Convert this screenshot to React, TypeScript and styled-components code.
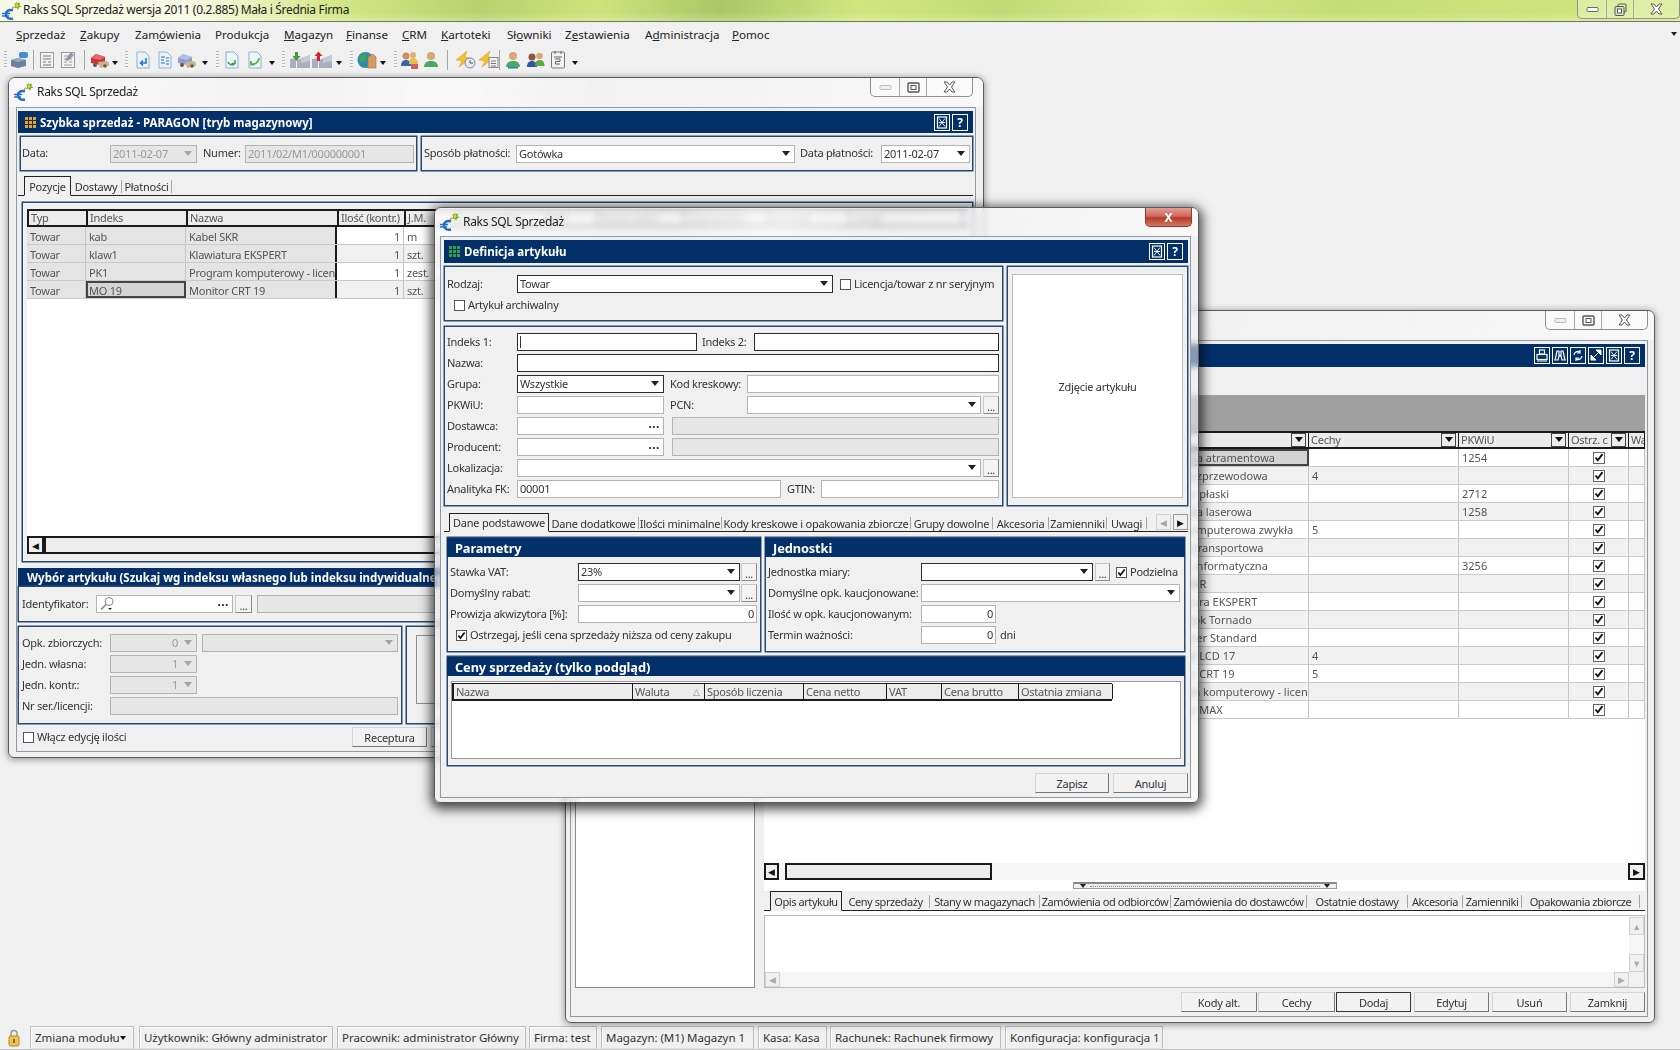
import React from 'react';
import styled, { createGlobalStyle } from 'styled-components';

const NAVY = '#04306a';
const LINE = '#27496f';

const GlobalStyle = createGlobalStyle`
  html, body { margin: 0; padding: 0; background: #f0f0f0; }
  * { box-sizing: border-box; }
  body { font-family: "Noto Sans", "Liberation Sans", sans-serif; font-size: 11px; letter-spacing: -0.25px; color: #333; }
`;

const Desktop = styled.div`
  position: relative;
  width: 1680px;
  height: 1050px;
  overflow: hidden;
  background: #f0f0f0;
  display: flex;
  flex-direction: column;
`;

const AppTitle = styled.div`
  height: 22px;
  flex: none;
  display: flex;
  align-items: flex-start;
  padding-left: 2px;
  border-bottom: 1px solid #6c7a58;
  background:
    linear-gradient(180deg, rgba(255,255,255,0) 60%, rgba(255,255,255,.25) 100%),
    linear-gradient(90deg, #f6f8e6 0, #f7f9e4 190px, #e4efb0 270px, #d3e685 340px, #b9d26c 480px, #cfe27c 600px, #aac765 720px, #d2e680 860px, #c3da74 1000px, #d6e986 1160px, #c6dc76 1340px, #d3e77f 1680px);
`;

const AppName = styled.span`
  font-size: 12px;
  letter-spacing: -0.32px;
  line-height: 20px;
  margin-left: 1px;
  color: #222;
`;

const MenuBar = styled.nav`
  height: 23px;
  flex: none;
  display: flex;
  align-items: center;
  padding: 1px 0 0 16px;
  background: #f0f0f0;
`;

const MenuItem = styled.span<{ $w: number }>`
  flex: none;
  width: ${(p) => p.$w}px;
  font-size: 11.6px;
  letter-spacing: 0;
  color: #222;
`;

const MenuEnd = styled.span`
  margin-left: auto;
  margin-right: 3px;
  width: 0;
  height: 0;
  border: 3px solid transparent;
  border-top: 4px solid #222;
  border-bottom: 0;
`;

const ToolBar = styled.div`
  height: 27px;
  flex: none;
  display: flex;
  align-items: center;
  padding-top: 2px;
  background: #f0f0f0;
`;

const ToolSlot = styled.span<{ $w: number }>`
  flex: none;
  width: ${(p) => p.$w}px;
  display: flex;
  justify-content: center;
  align-items: center;
  svg { flex: none; }
`;

const Grip = styled.i`
  width: 3px;
  height: 17px;
  background: repeating-linear-gradient(180deg, #b5b5b5 0 1px, #f5f5f5 1px 3px);
`;

const ToolSep = styled.i`
  width: 1px;
  height: 20px;
  background: #a5a5a5;
`;

const ToolCaret = styled.i`
  width: 0;
  height: 0;
  margin-top: 7px;
  border: 3px solid transparent;
  border-top: 4px solid #111;
  border-bottom: 0;
`;

const StatusCaret = styled(ToolCaret)`
  margin-top: 0;
  margin-right: 3px;
`;

const Spacer = styled.div`
  flex: 1;
`;

const StatusBar = styled.footer`
  height: 24px;
  flex: none;
  display: flex;
  align-items: stretch;
  padding-left: 8px;
  border-bottom: 1px solid #c4c4c4;
  background: #f0f0f0;
`;

const StatusLock = styled.span`
  width: 22px;
  flex: none;
  display: flex;
  align-items: center;
`;

const StatusCell = styled.span<{ $w: number; $gap?: number }>`
  flex: none;
  width: ${(p) => p.$w}px;
  margin-right: ${(p) => p.$gap ?? 4}px;
  display: flex;
  align-items: center;
  justify-content: space-between;
  padding: 0 4px;
  white-space: nowrap;
  border: 1px solid #bdbdbd;
  border-bottom-color: #e4e4e4;
  box-shadow: inset 1px 1px 0 #fff;
  font-size: 11.5px;
  letter-spacing: -0.05px;
`;

const Win = styled.section<{ $x: number; $y: number; $w: number; $h: number; $z: number; $deep?: boolean }>`
  position: absolute;
  left: ${(p) => p.$x}px;
  top: ${(p) => p.$y}px;
  width: ${(p) => p.$w}px;
  height: ${(p) => p.$h}px;
  z-index: ${(p) => p.$z};
  display: flex;
  flex-direction: column;
  border: 1px solid #5c5c5c;
  border-radius: 7px 7px 6px 6px;
  overflow: hidden;
  background: rgba(240, 240, 240, 0.55);
  backdrop-filter: blur(3px);
  box-shadow: ${(p) => (p.$deep ? '0 3px 12px 3px rgba(0,0,0,.72)' : '0 1px 6px 1px rgba(0,0,0,.35)')};
`;

const WinCaption = styled.header<{ $h: number; $pad: number }>`
  height: ${(p) => p.$h}px;
  flex: none;
  display: flex;
  align-items: flex-start;
  padding: 0 ${(p) => p.$pad}px 0 5px;
  background: linear-gradient(100deg, rgba(255,255,255,.55) 0, rgba(255,255,255,.2) 30%, rgba(255,255,255,.55) 45%, rgba(255,255,255,.15) 60%, rgba(255,255,255,.5) 100%);
`;

const WinName = styled.span`
  font-size: 12px;
  letter-spacing: -0.3px;
  line-height: 28px;
  margin-left: 3px;
  color: #222;
`;

const WinLogo = styled.span`
  margin-top: 4px;
  display: flex;
`;

const AppLogo = styled.span`
  margin-top: 1px;
  display: flex;
`;

const CaptionGroup = styled.div`
  margin-left: auto;
  height: 19px;
  display: flex;
  border: 1px solid #8f8f8f;
  border-top: 0;
  border-radius: 0 0 5px 5px;
  background: rgba(255, 255, 255, 0.3);
`;

const CaptionBtn = styled.span<{ $w: number }>`
  width: ${(p) => p.$w}px;
  display: flex;
  align-items: center;
  justify-content: center;
  & + & { border-left: 1px solid #a8a8a8; }
`;

const CloseRed = styled.span`
  margin-left: auto;
  width: 47px;
  height: 19px;
  display: flex;
  align-items: center;
  justify-content: center;
  border: 1px solid #8c3a32;
  border-top: 0;
  border-radius: 0 0 5px 5px;
  background: linear-gradient(180deg, #e2a096 0, #d2675a 45%, #b8392c 55%, #cf7a66 100%);
  color: #fff;
  font-weight: 700;
  font-size: 12px;
`;

const WinBody = styled.div<{ $m: string; $p: string }>`
  flex: 1;
  min-height: 0;
  margin: ${(p) => p.$m};
  padding: ${(p) => p.$p};
  display: flex;
  flex-direction: column;
  background: #f0f0f0;
  border: 1px solid #8d9aa6;
`;

const NavyBar = styled.div<{ $h?: number; $pl?: number }>`
  height: ${(p) => p.$h ?? 23}px;
  flex: none;
  display: flex;
  align-items: center;
  gap: 4px;
  padding: 0 5px 0 ${(p) => p.$pl ?? 5}px;
  background: ${NAVY};
  color: #fff;
  font-weight: 700;
  font-size: 11.5px;
  letter-spacing: 0;
  white-space: nowrap;
  overflow: hidden;
`;

const NavyTools = styled.div`
  margin-left: auto;
  display: flex;
  gap: 2px;
`;

const NavyBtn = styled.span`
  width: 16px;
  height: 17px;
  display: flex;
  align-items: center;
  justify-content: center;
  border: 1px solid #fff;
  color: #fff;
  font-size: 12px;
  font-weight: 700;
`;

const SectionHead = styled(NavyBar)<{ $big?: boolean; $fill?: boolean }>`
  height: ${(p) => (p.$big ? 19 : 18)}px;
  margin: ${(p) => (p.$fill ? '0' : '0 -1px')};
  ${(p) => (p.$fill ? 'flex: 1;' : '')}
  ${(p) => (p.$big ? 'font-size: 12.8px; letter-spacing: -0.1px;' : '')}
`;

const Panel = styled.div<{ $w?: number; $h?: number; $grow?: boolean; $p?: string }>`
  ${(p) => (p.$w ? `width: ${p.$w}px; flex: none;` : '')}
  ${(p) => (p.$h ? `height: ${p.$h}px;` : '')}
  ${(p) => (p.$grow ? 'flex: 1; min-width: 0;' : '')}
  padding: ${(p) => p.$p ?? '0'};
  border: 1px solid ${LINE};
  box-shadow: 0 0 0 .5px ${LINE};
  background: #f0f0f0;
  display: flex;
  flex-direction: column;
`;

const PlainStack = styled.div<{ $w?: number; $p?: string }>`
  ${(p) => (p.$w ? `width: ${p.$w}px; flex: none;` : '')}
  padding: ${(p) => p.$p ?? '0'};
  display: flex;
  flex-direction: column;
`;

const Row = styled.div<{ $mt?: number; $ml?: number; $h?: number; $end?: boolean; $stretch?: boolean; $grow?: boolean }>`
  display: flex;
  align-items: ${(p) => (p.$stretch ? 'stretch' : 'center')};
  justify-content: ${(p) => (p.$end ? 'flex-end' : 'flex-start')};
  flex: ${(p) => (p.$grow ? '1' : 'none')};
  white-space: nowrap;
  ${(p) => (p.$h ? `height: ${p.$h}px;` : '')}
  margin-top: ${(p) => p.$mt ?? 0}px;
  margin-left: ${(p) => p.$ml ?? 0}px;
`;

const FormRow = styled.div<{ $ml?: number }>`
  height: 18px;
  flex: none;
  display: flex;
  align-items: center;
  white-space: nowrap;
  margin-left: ${(p) => p.$ml ?? 0}px;
  & + & { margin-top: 3px; }
`;

const Label = styled.label<{ $w?: number; $ml?: number }>`
  flex: none;
  ${(p) => (p.$w ? `width: ${p.$w}px;` : '')}
  margin-left: ${(p) => p.$ml ?? 0}px;
  padding-bottom: 2px;
  white-space: nowrap;
  color: #333;
`;

const Field = styled.div<{ $w?: number; $ml?: number; $strong?: boolean; $off?: boolean; $right?: boolean; $grow?: boolean }>`
  ${(p) => (p.$w ? `width: ${p.$w}px; flex: none;` : '')}
  ${(p) => (p.$grow ? 'flex: 1; min-width: 0;' : '')}
  height: 18px;
  margin-left: ${(p) => p.$ml ?? 0}px;
  display: flex;
  align-items: center;
  justify-content: ${(p) => (p.$right ? 'flex-end' : 'space-between')};
  padding: 0 2px 1px;
  white-space: nowrap;
  overflow: hidden;
  border: 1px solid ${(p) => (p.$strong ? '#2b2b2b' : '#b4b4b4')};
  background: ${(p) => (p.$off ? '#e6e6e6' : '#fff')};
  color: ${(p) => (p.$off ? '#9a9a9a' : '#333')};
`;

const Caret = styled.i<{ $off?: boolean; $tight?: boolean }>`
  flex: none;
  width: 0;
  height: 0;
  margin: ${(p) => (p.$tight ? '0 2px 0 6px' : '0 2px 0 auto')};
  border: 4px solid transparent;
  border-top: 5px solid ${(p) => (p.$off ? '#a5a5a5' : '#222')};
  border-bottom: 0;
`;

const Dots = styled.b`
  margin-left: auto;
  margin-right: 1px;
  line-height: 10px;
  letter-spacing: 0.5px;
  font-size: 12px;
  transform: translateY(-2px);
  color: #222;
`;

const MiniBtn = styled.span<{ $w?: number; $ml?: number }>`
  flex: none;
  width: ${(p) => p.$w ?? 16}px;
  height: 18px;
  margin-left: ${(p) => p.$ml ?? 2}px;
  display: flex;
  align-items: center;
  justify-content: center;
  border: 1px solid #c8c8c8;
  border-right-color: #8a8a8a;
  border-bottom-color: #8a8a8a;
  background: #f3f3f3;
  font-size: 11px;
  line-height: 12px;
  padding-top: 3px;
`;

const Check = styled.span<{ $ml?: number }>`
  flex: none;
  width: 11px;
  height: 11px;
  margin-left: ${(p) => p.$ml ?? 0}px;
  margin-right: 3px;
  display: inline-flex;
  align-items: center;
  justify-content: center;
  border: 1px solid #555;
  background: #fff;
`;

const TabBar = styled.div<{ $pl: number; $h: number; $mt: number; $fill?: boolean }>`
  height: ${(p) => p.$h}px;
  flex: none;
  margin-top: ${(p) => p.$mt}px;
  display: flex;
  align-items: stretch;
  padding-left: ${(p) => p.$pl}px;
  border-bottom: 1px solid #222;
  ${(p) => (p.$fill ? 'background: #f0f0f0; letter-spacing: -0.42px;' : '')}
`;

const Tab = styled.span<{ $w: number; $active?: boolean }>`
  flex: none;
  width: ${(p) => p.$w}px;
  display: flex;
  align-items: center;
  justify-content: center;
  white-space: nowrap;
  margin-top: 4px;
  margin-bottom: 2px;
  border-right: 1px solid #a5a5a5;
  ${(p) =>
    p.$active
      ? `margin: 0 0 -1px; border: 1px solid #222; border-bottom: 1px solid #f0f0f0; background: #f0f0f0;`
      : ''}
`;

const TabArrow = styled.span<{ $ml: number; $dim?: boolean }>`
  width: 15px;
  height: 16px;
  margin: 1px 0 0 ${(p) => p.$ml}px;
  display: flex;
  align-items: center;
  justify-content: center;
  border: 1px solid ${(p) => (p.$dim ? '#cfcfcf' : '#9a9a9a')};
  color: ${(p) => (p.$dim ? '#a8a8a8' : '#111')};
  font-size: 9px;
`;

const Btn = styled.button<{ $w: number; $ml?: number; $default?: boolean }>`
  flex: none;
  width: ${(p) => p.$w}px;
  height: 20px;
  margin-left: ${(p) => p.$ml ?? 0}px;
  padding: 0;
  font: inherit;
  letter-spacing: inherit;
  color: #333;
  background: #f2f2f2;
  border: 1px solid ${(p) => (p.$default ? '#333' : '#d5d5d5')};
  border-right-color: ${(p) => (p.$default ? '#333' : '#777')};
  border-bottom-color: ${(p) => (p.$default ? '#333' : '#777')};
`;

/* siatki */
const GridHead = styled.div<{ $w?: number; $inset?: boolean; $open?: boolean }>`
  height: 18px;
  flex: none;
  display: flex;
  ${(p) => (p.$w ? `width: ${p.$w}px;` : '')}
  ${(p) => (p.$inset ? 'margin: 1px 0 0 0;' : '')}
  border-top: ${(p) => (p.$inset ? '1px' : '2px')} solid #1a1a1a;
  border-bottom: 2px solid #1a1a1a;
  border-left: ${(p) => (p.$open ? '0' : '2px solid #1a1a1a')};
  background: #ececec;
`;

const HeadCell = styled.div<{ $w: number; $thin?: boolean }>`
  flex: none;
  width: ${(p) => p.$w}px;
  display: flex;
  align-items: center;
  padding: 0 2px 1px;
  overflow: hidden;
  white-space: nowrap;
  color: #555;
  border-right: ${(p) => (p.$thin ? '1px' : '2px')} solid #1a1a1a;
`;

const GridRow = styled.div`
  height: 18px;
  flex: none;
  display: flex;
  border-bottom: 1px solid #c9c9c9;
`;

const ListRow = styled(GridRow)`
  font-size: 11px;
  letter-spacing: 0;
`;

const GridCell = styled.div<{ $w: number; $bg?: string; $right?: boolean; $focus?: boolean; $center?: boolean; $edge?: boolean; $low?: boolean }>`
  flex: none;
  width: ${(p) => p.$w}px;
  display: flex;
  align-items: center;
  justify-content: ${(p) => (p.$center ? 'center' : p.$right ? 'flex-end' : 'flex-start')};
  padding: ${(p) => (p.$low ? '2px 3px 0' : '0 3px')};
  overflow: hidden;
  white-space: nowrap;
  color: #555;
  background: ${(p) => p.$bg ?? 'transparent'};
  border-right: 1px solid #c4c4c4;
  ${(p) => (p.$edge ? 'border-right: 2px solid #1a1a1a;' : '')}
  ${(p) => (p.$focus ? 'outline: 2px solid #444; outline-offset: -2px; background: #d4d4d4;' : '')}
`;

const CheckCell = styled(Check)`
  margin: 0;
  width: 12px;
  height: 12px;
  border-color: #666;
`;

const HScroll = styled.div<{ $h: number }>`
  height: ${(p) => p.$h}px;
  flex: none;
  display: flex;
  align-items: stretch;
  background: #f6f6f6;
`;

const ScrollArrow = styled.span<{ $w: number; $dim?: boolean; $ml?: number }>`
  flex: none;
  width: ${(p) => p.$w}px;
  margin-left: ${(p) => p.$ml ?? 0}px;
  display: flex;
  align-items: center;
  justify-content: center;
  font-size: 9px;
  color: ${(p) => (p.$dim ? '#aaa' : '#111')};
  border: ${(p) => (p.$dim ? '1px solid #d2d2d2' : '2px solid #1a1a1a')};
  background: #f0f0f0;
`;

const ScrollCorner = styled.span`
  width: 15px;
  flex: none;
  background: #f0f0f0;
`;

const ScrollThumb = styled.span<{ $w: number; $ml: number }>`
  flex: none;
  width: ${(p) => p.$w}px;
  margin-left: ${(p) => p.$ml}px;
  border: 2px solid #1a1a1a;
  background: #ededed;
`;

const Fill = styled.div<{ $white?: boolean }>`
  flex: 1;
  min-height: 0;
  ${(p) => (p.$white ? 'background: #fff;' : '')}
`;

const ListBox = styled.div`
  flex: 1;
  margin: 5px 3px 6px;
  display: flex;
  flex-direction: column;
  border: 1px solid #9a9a9a;
  background: #fff;
  min-height: 0;
`;

const GrayBand = styled.div`
  height: 36px;
  flex: none;
  background: #a0a0a0;
`;

const ColumnSide = styled.div`
  width: 180px;
  flex: none;
  background: #fff;
  border: 1px solid #8c8c8c;
`;

const ColumnMain = styled.div`
  flex: 1;
  min-width: 0;
  display: flex;
  flex-direction: column;
  background: #fff;
`;

const Columns = styled.div`
  flex: 1;
  min-height: 0;
  margin-top: 28px;
  display: flex;
  gap: 9px;
`;

const HeadDrop = styled.span`
  margin-left: auto;
  width: 15px;
  height: 14px;
  flex: none;
  display: flex;
  align-items: center;
  justify-content: center;
  border: 1px solid #444;
  i {
    width: 0;
    height: 0;
    border: 4px solid transparent;
    border-top: 5px solid #111;
    border-bottom: 0;
  }
`;

const Splitter = styled.div`
  width: 264px;
  height: 7px;
  flex: none;
  margin: 2px 0 0 309px;
  display: flex;
  align-items: center;
  gap: 4px;
  padding: 0 6px;
  border: 1px solid #999;
  border-top: 2px solid #888;
  background: #f0f0f0;
  i {
    width: 0;
    height: 0;
    border: 3px solid transparent;
    border-top: 4px solid #222;
    border-bottom: 0;
  }
  span {
    flex: 1;
    border-top: 1px dotted #888;
  }
`;

const MemoBox = styled.div`
  height: 73px;
  flex: none;
  margin-top: 4px;
  display: flex;
  flex-direction: column;
  border: 1px solid #bdbdbd;
  background: #fff;
`;

const MemoMain = styled.div`
  flex: 1;
  min-height: 0;
  display: flex;
`;

const VScroll = styled.div`
  width: 15px;
  flex: none;
  margin-left: auto;
  display: flex;
  flex-direction: column;
  justify-content: space-between;
  background: #f6f6f6;
  padding: 1px 0 0;
`;

const VArrow = styled(ScrollArrow)`
  height: 18px;
  width: 15px;
`;

const PhotoBox = styled.div`
  flex: 1;
  margin: 7px 4px;
  display: flex;
  align-items: center;
  justify-content: center;
  background: #fff;
  border: 1px solid #bcbcbc;
`;

const InnerBox = styled.div`
  flex: 1;
  margin: 8px 4px 19px 9px;
  border: 1px solid #8e8e8e;
  border-right: 0;
`;

const CaretUp = styled.span`
  margin-left: auto;
  margin-right: 2px;
  font-size: 9px;
  color: #888;
`;

const TextCaret = styled.i`
  height: 12px;
  border-left: 1px solid #333;
`;

/* ikony */
const EuroLogo = () => (
  <svg width="20" height="20" viewBox="0 0 20 20">
    <path d="M11 9.5C7 8 4 10 4 13.500s3.500 5 7 4" fill="none" stroke="#1f6fc4" strokeWidth="2.4" />
    <path d="M0 12.500h8M0 15h7" stroke="#1f6fc4" strokeWidth="1.5" />
    <path d="M14 0l1.400 2.200 2.600-.6-.6 2.600 2.200 1.600-2.700.5-.7 2.700-1.500-2.300-2.700.3 1.300-2.400-1.300-2.400 2.500.6z" fill="#6fae28" />
    <circle cx="15" cy="4.500" r="1.400" fill="#f0cc30" />
    <path d="M10 8l1.500-2.500" stroke="#e07a2c" strokeWidth="1.300" />
  </svg>
);

const Cells = ({ color }: { color: string }) => (
  <svg width="11" height="11" viewBox="0 0 11 11">
    {[0, 4, 8].flatMap((x) => [0, 4, 8].map((y) => <rect key={`${x}-${y}`} x={x} y={y} width="3" height="3" fill={color} />))}
  </svg>
);

const CapMin = () => <svg width="13" height="7" viewBox="0 0 13 7"><rect x="1" y="1.500" width="11" height="4" rx="1" fill="#fff" stroke="#666" /></svg>;
const CapMinDim = () => <svg width="13" height="7" viewBox="0 0 13 7"><rect x="1" y="1.500" width="11" height="4" rx="1" fill="#eee" stroke="#bbb" /></svg>;
const CapMax = () => <svg width="13" height="11" viewBox="0 0 13 11"><rect x="1" y="1" width="11" height="9" rx="1" fill="none" stroke="#555" strokeWidth="1.400" /><rect x="4" y="3.500" width="5" height="4" fill="#fff" stroke="#555" /></svg>;
const CapRestore = () => <svg width="13" height="13" viewBox="0 0 13 13"><rect x="4" y="1" width="8" height="8" rx="1" fill="none" stroke="#555" /><rect x="1" y="3.500" width="9" height="9" rx="1" fill="#dfe8b8" stroke="#555" /><rect x="3.500" y="6" width="4" height="4" fill="#fff" stroke="#555" /></svg>;
const CapClose = () => <svg width="13" height="12" viewBox="0 0 13 12"><path d="M1 1h3l2.500 3L9 1h3L8.500 6 12 11H9L6.500 8 4 11H1l3.500-5z" fill="#fff" stroke="#555" /></svg>;

const TickMark = () => <svg width="10" height="9" viewBox="0 0 10 9"><path d="M1.500 4.500l2.300 2.800L8.500 1.200" fill="none" stroke="#111" strokeWidth="1.900" /></svg>;

const NavIcon = ({ kind }: { kind: string }) => {
  const white = { fill: 'none', stroke: '#fff', strokeWidth: 1.2 };
  return (
    <svg width="12" height="13" viewBox="0 0 12 13">
      {kind === 'box' && <><rect x="1.500" y="1" width="9" height="11" {...white} /><path d="M3 2.500l6 8M9 2.500l-6 8M3 6.500h6" {...white} strokeWidth={0.9} /></>}
      {kind === 'print' && <><rect x="3.500" y="1" width="5" height="4" {...white} /><rect x="1" y="5.500" width="10" height="5" {...white} /><path d="M1 12h10" {...white} /></>}
      {kind === 'find' && <path d="M3 2h2v4l1 1 1-1V2h2l2 9H8L7 7H5L4 11H1z" {...white} />}
      {kind === 'sync' && <path d="M2 6a4 4 0 0 1 6-3M10 7a4 4 0 0 1-6 3M8 1v3h-3M4 12V9h3" {...white} />}
      {kind === 'expand' && <path d="M1 11L11 1M11 1H6l5 5zM1 11h5L1 6z" fill="#fff" stroke="#fff" />}
    </svg>
  );
};

const docBase = (stroke: string, fill = '#f6f9fc') => (
  <path d="M3 1h8l4 4v12H3z" fill={fill} stroke={stroke} strokeWidth="1" />
);

const ToolIcon = ({ kind }: { kind: string }) => {
  switch (kind) {
    case 'db':
      return (
        <svg width="20" height="18" viewBox="0 0 20 18">
          <path d="M1 9l7-2 8 2v6l-8 2-7-2z" fill="#6f7fa0" />
          <path d="M1 9l7 2 8-2-8-2z" fill="#98a6c0" />
          <rect x="9" y="1" width="9" height="6" rx="2" fill="#3f8fd0" />
        </svg>
      );
    case 'sheet':
    case 'sheetGear':
      return (
        <svg width="18" height="18" viewBox="0 0 18 18">
          <rect x="2.500" y="1.500" width="13" height="15" fill="#f2f2f2" stroke="#9a9a9a" />
          <path d="M5 5h8M5 8h8M5 11h3M10 11h3M5 14h8" stroke={kind === 'sheet' ? '#777' : '#999'} />
          {kind === 'sheetGear' && <path d="M12 1l3 3-6 6-3-1z" fill="#8d99a8" />}
        </svg>
      );
    case 'truckRed':
    case 'truckBlue': {
      const c = kind === 'truckRed' ? '#c9353a' : '#8e9ed0';
      return (
        <svg width="22" height="18" viewBox="0 0 22 18">
          <path d="M2 7l5-4 9 3v5l-5 3-9-2z" fill={c} />
          <path d="M2 7l9 2 5-3-9-3z" fill={kind === 'truckRed' ? '#e2666a' : '#b5c0e4'} />
          <path d="M9 11l9-1 2 2v3l-9 2z" fill="#c9b590" />
          <circle cx="6" cy="14" r="2" fill="#6a5a44" />
          <circle cx="16" cy="15" r="1.800" fill="#6a5a44" />
        </svg>
      );
    }
    case 'docBlue':
      return <svg width="18" height="18" viewBox="0 0 18 18">{docBase('#8fb0d4', '#eaf3fb')}<path d="M12 7v5H7M9 9.500L6.500 12 9 14.500" fill="none" stroke="#2878c8" strokeWidth="1.600" /></svg>;
    case 'docList':
      return <svg width="18" height="18" viewBox="0 0 18 18">{docBase('#8fb0d4', '#eaf3fb')}<path d="M5 6h4M5 9h3M5 12h4M10 7h3M10 10h3M10 13h3" stroke="#2c6fb0" /></svg>;
    case 'docGreen':
      return <svg width="18" height="18" viewBox="0 0 18 18">{docBase('#8fb0d4', '#eef5fb')}<path d="M5 11c1 3 5 4 7 1M12 9v3.500H8.500" fill="none" stroke="#3fa04a" strokeWidth="1.600" /></svg>;
    case 'docLime':
      return <svg width="18" height="18" viewBox="0 0 18 18">{docBase('#8fb0d4', '#eef5fb')}<path d="M13 7c0 4-4 7-8 6M5 10v3.500h3.500" fill="none" stroke="#59b43c" strokeWidth="1.800" /></svg>;
    case 'boxGreen':
    case 'boxRed': {
      const c = kind === 'boxGreen' ? '#3f9a3f' : '#d4242a';
      return (
        <svg width="22" height="18" viewBox="0 0 22 18">
          <path d="M1 8l6-1v10H1zM8 9l13-5v13H8z" fill="#a9afc0" />
          <path d="M12 7l9-3v6l-9 2z" fill="#c4c9d6" />
          <path d={kind === 'boxGreen' ? 'M6 1h3v4h2.500L7.500 10 3.500 5H6z' : 'M6 10V5H3.500l4-4.500 4 4.500H9v5z'} fill={c} />
        </svg>
      );
    }
    case 'globe':
      return (
        <svg width="20" height="20" viewBox="0 0 20 20">
          <circle cx="8.500" cy="10" r="8" fill="#2d8ab0" />
          <path d="M2 8l5-5 3 3-2 5-3 1zM10 14l3 3-3 1z" fill="#3fa650" />
          <path d="M11 7l5-3 3 3v11h-8z" fill="#d69a62" stroke="#a8703c" strokeWidth=".6" />
        </svg>
      );
    case 'people':
      return (
        <svg width="20" height="18" viewBox="0 0 20 18">
          <circle cx="6" cy="5" r="3.500" fill="#c89060" />
          <path d="M1 15c0-4 2-6 5-6s5 2 5 6z" fill="#3a62b0" />
          <circle cx="13" cy="4" r="3" fill="#e0b070" />
          <path d="M9 13c0-4 1-6 4-6s5 2 5 6z" fill="#e2c04a" />
          <path d="M11 13h7v5h-7z" fill="#c83a3a" opacity=".8" />
        </svg>
      );
    case 'person':
    case 'personGreen':
      return (
        <svg width="16" height="18" viewBox="0 0 16 18">
          <circle cx="8" cy="5" r="4" fill="#d8a878" />
          <path d="M1 16c0-4 3-6 7-6s7 2 7 6z" fill="#4aa860" />
          {kind === 'personGreen' && <path d="M3 16h10v1.500H3z" fill="#2f7fc0" />}
        </svg>
      );
    case 'peopleDuo':
      return (
        <svg width="20" height="18" viewBox="0 0 20 18">
          <circle cx="6" cy="6" r="3.500" fill="#8a5a44" />
          <path d="M1 16c0-4 2-6 5-6s5 2 5 6z" fill="#2f56a8" />
          <circle cx="13.500" cy="5" r="3.300" fill="#d8a878" />
          <path d="M9 15c0-4 1.500-6 4.500-6s5 2 5 6z" fill="#5aa848" />
        </svg>
      );
    case 'boltClock':
    case 'boltCal':
      return (
        <svg width="22" height="18" viewBox="0 0 22 18">
          <path d="M12 0L1 9l6 1-3 6 12-9-6-1z" fill="#f0c030" stroke="#d89a20" strokeWidth=".5" />
          {kind === 'boltClock' ? (
            <><circle cx="15" cy="12" r="5" fill="#e8eef4" stroke="#7a8a9a" /><path d="M15 9v3h3" fill="none" stroke="#456" /></>
          ) : (
            <><rect x="11" y="6.500" width="9" height="10" fill="#f2f2f2" stroke="#888" /><path d="M13 10h5M13 12.500h5M13 15h5" stroke="#777" /></>
          )}
        </svg>
      );
    case 'calendar':
      return (
        <svg width="16" height="20" viewBox="0 0 16 20">
          <rect x="1.500" y="2" width="13" height="16" rx="1" fill="#f2f2f2" stroke="#777" />
          <path d="M5 1v3M11 1v3M4 7h8M5 9h5v2.500H5.500V14H10" fill="none" stroke="#666" />
        </svg>
      );
    default:
      return null;
  }
};

const LockIcon = () => (
  <svg width="12" height="18" viewBox="0 0 12 18">
    <path d="M3 8V4.500a3 3 0 0 1 6 0V8" fill="none" stroke="#9a9a9a" strokeWidth="1.500" />
    <rect x="1" y="7" width="10" height="10" rx="1.500" fill="#eec64e" stroke="#b48c28" />
    <rect x="5" y="10" width="2" height="4" fill="#8a6a1c" />
  </svg>
);

const SearchIcon = () => (
  <svg width="16" height="15" viewBox="0 0 16 15">
    <circle cx="10" cy="5.500" r="4" fill="none" stroke="#888" />
    <path d="M7 8.500l-5 5" stroke="#999" strokeWidth="1.800" />
    <path d="M9 12h4l-2 2z" fill="#222" />
  </svg>
);

/* dane */
const menu: [React.ReactNode, number][] = [
  [<><u>S</u>przedaż</>, 64],
  [<><u>Z</u>akupy</>, 55],
  [<>Zam<u>ó</u>wienia</>, 80],
  ['Produkcja', 69],
  [<><u>M</u>agazyn</>, 62],
  [<><u>F</u>inanse</>, 56],
  [<><u>C</u>RM</>, 39],
  [<><u>K</u>artoteki</>, 66],
  [<>Sł<u>o</u>wniki</>, 58],
  [<>Z<u>e</u>stawienia</>, 80],
  [<>A<u>d</u>ministracja</>, 87],
  [<><u>P</u>omoc</>, 50],
];

const tools: [string, number][] = [
  ['grip', 10], ['db', 20], ['sep', 6], ['sheet', 22], ['sheetGear', 20], ['sep', 12], ['truckRed', 20], ['caret', 10],
  ['grip', 12], ['docBlue', 21], ['docList', 24], ['truckBlue', 20], ['caret', 16], ['grip', 8], ['docGreen', 22], ['docLime', 24], ['caret', 10],
  ['grip', 12], ['boxGreen', 21], ['boxRed', 24], ['caret', 10], ['grip', 14], ['globe', 18], ['caret', 14], ['grip', 10],
  ['people', 20], ['person', 22], ['sep', 10], ['boltClock', 28], ['boltCal', 18], ['sep', 2], ['personGreen', 26], ['peopleDuo', 20], ['calendar', 24], ['caret', 10],
];

const status: [string, number, number][] = [
  ['Użytkownik: Główny administrator', 194, 4],
  ['Pracownik: administrator Główny', 189, 3],
  ['Firma: test', 68, 4],
  ['Magazyn: (M1) Magazyn 1', 153, 4],
  ['Kasa: Kasa', 69, 3],
  ['Rachunek: Rachunek firmowy', 171, 4],
  ['Konfiguracja: konfiguracja 1', 158, 0],
];

const saleColumns: [string, number][] = [['Typ', 59], ['Indeks', 100], ['Nazwa', 151], ['Ilość (kontr.)', 67], ['J.M.', 50], ['Cena na dok.', 92], ['VAT', 50], ['Rabat netto', 86], ['Cena brutto', 85], ['Wartość', 80], ['Uwagi', 115]];
const saleRows = [
  ['kab', 'Kabel SKR', 'm'],
  ['klaw1', 'Klawiatura EKSPERT', 'szt.'],
  ['PK1', 'Program komputerowy - licencja', 'zest.'],
  ['MO 19', 'Monitor CRT 19', 'szt.'],
];

const articleRows: [string, string, string][] = [
  ['Drukarka atramentowa', '', '1254'],
  ['Mysz bezprzewodowa', '4', ''],
  ['Monitor płaski', '', '2712'],
  ['Drukarka laserowa', '', '1258'],
  ['Mysz komputerowa zwykła', '5', ''],
  ['Usługa transportowa', '', ''],
  ['Usługa informatyczna', '', '3256'],
  ['Kabel SKR', '', ''],
  ['Klawiatura EKSPERT', '', ''],
  ['Notebook Tornado', '', ''],
  ['Komputer Standard', '', ''],
  ['Monitor LCD 17', '4', ''],
  ['Monitor CRT 19', '5', ''],
  ['Program komputerowy - licencja', '', ''],
  ['Monitor MAX', '', ''],
];

const articleTabs: [string, number][] = [['Dane dodatkowe', 90], ['Ilości minimalne', 83], ['Kody kreskowe i opakowania zbiorcze', 189], ['Grupy dowolne', 82], ['Akcesoria', 56], ['Zamienniki', 58], ['Uwagi', 40]];
const lowerTabs: [string, number][] = [['Ceny sprzedaży', 88], ['Stany w magazynach', 110], ['Zamówienia od odbiorców', 131], ['Zamówienia do dostawców', 136], ['Ostatnie dostawy', 101], ['Akcesoria', 55], ['Zamienniki', 59], ['Opakowania zbiorcze', 118]];
const priceColumns: [string, number][] = [['Nazwa', 179], ['Waluta', 72], ['Sposób liczenia', 99], ['Cena netto', 83], ['VAT', 55], ['Cena brutto', 77], ['Ostatnia zmiana', 94]];
const bottomButtons: [string, number, number, boolean?][] = [['Kody alt.', 76, 0], ['Cechy', 77, 1], ['Dodaj', 75, 1, true], ['Edytuj', 75, 3], ['Usuń', 75, 3], ['Zamknij', 75, 3]];

const Combo = ({ value, w, strong, off, grow, ml }: { value?: string; w?: number; strong?: boolean; off?: boolean; grow?: boolean; ml?: number }) => (
  <Field $w={w} $strong={strong} $off={off} $grow={grow} $ml={ml}>
    {value && <span>{value}</span>}
    <Caret $off={off} />
  </Field>
);

const Tick = ({ on, ml }: { on?: boolean; ml?: number }) => <Check $ml={ml}>{on && <TickMark />}</Check>;

const SaleWindow = () => (
  <Win $x={8} $y={77} $w={976} $h={681} $z={1}>
    <WinCaption $h={29} $pad={10}>
      <WinLogo><EuroLogo /></WinLogo>
      <WinName>Raks SQL Sprzedaż</WinName>
      <CaptionGroup>
        <CaptionBtn $w={28}><CapMinDim /></CaptionBtn>
        <CaptionBtn $w={27}><CapMax /></CaptionBtn>
        <CaptionBtn $w={46}><CapClose /></CaptionBtn>
      </CaptionGroup>
    </WinCaption>
    <WinBody $m="0 7px 5px 7px" $p="3px 2px 0 1px">
      <NavyBar $h={22} $pl={7}>
        <Cells color="#f0a020" />
        Szybka sprzedaż - PARAGON [tryb magazynowy]
        <NavyTools>
          <NavyBtn><NavIcon kind="box" /></NavyBtn>
          <NavyBtn>?</NavyBtn>
        </NavyTools>
      </NavyBar>
      <Row $mt={3} $ml={2} $h={35}>
        <Panel $w={397} $h={35} $p="0 1px">
          <Row $h={33}>
            <Label $w={88}>Data:</Label>
            <Combo value="2011-02-07" w={87} off />
            <Label $w={42} $ml={6}>Numer:</Label>
            <Field $w={169} $off>2011/02/M1/000000001</Field>
          </Row>
        </Panel>
        <Row $ml={4}>
          <Panel $w={552} $h={35} $p="0 2px">
            <Row $h={33}>
              <Label $w={92}>Sposób płatności:</Label>
              <Combo value="Gotówka" w={279} />
              <Label $w={81} $ml={5}>Data płatności:</Label>
              <Combo value="2011-02-07" w={89} />
            </Row>
          </Panel>
        </Row>
      </Row>
      <TabBar $pl={6} $h={20} $mt={5}>
        <Tab $w={47} $active>Pozycje</Tab>
        <Tab $w={51}>Dostawy</Tab>
        <Tab $w={50}>Płatności</Tab>
      </TabBar>
      <Row $mt={6} $ml={4} $h={360} $stretch>
        <Panel $w={951} $p="6px 4px 7px">
          <GridHead>
            {saleColumns.map(([name, w], i) => <HeadCell key={name} $w={w} $thin={i >= 4}>{name}</HeadCell>)}
          </GridHead>
          {saleRows.map((r, i) => (
            <GridRow key={r[0]}>
              <GridCell $w={59} $low $bg="#e4e4e4">Towar</GridCell>
              <GridCell $w={100} $low $bg="#e4e4e4" $focus={i === 3}>{r[0]}</GridCell>
              <GridCell $w={151} $low $bg="#e4e4e4" $edge>{r[1]}</GridCell>
              <GridCell $w={67} $low $right $bg={i % 2 ? '#f0f0f0' : '#fff'}>1</GridCell>
              <GridCell $w={50} $low $bg={i % 2 ? '#f0f0f0' : '#fff'}>{r[2]}</GridCell>
            </GridRow>
          ))}
          <Fill $white />
          <HScroll $h={18}>
            <ScrollArrow $w={17}>◀</ScrollArrow>
            <ScrollThumb $w={890} $ml={0} />
          </HScroll>
        </Panel>
      </Row>
      <Row $mt={6} $stretch>
        <SectionHead $pl={9} $fill>Wybór artykułu (Szukaj wg indeksu własnego lub indeksu indywidualnego kontrahenta)</SectionHead>
      </Row>
      <Panel $h={36} $p="0 3px">
        <Row $h={34}>
          <Label $w={74}>Identyfikator:</Label>
          <Field $w={137}><SearchIcon /><Dots>...</Dots></Field>
          <MiniBtn $w={17}>...</MiniBtn>
          <Field $w={700} $ml={5} $off />
        </Row>
      </Panel>
      <Row $mt={4} $h={98} $stretch>
        <Panel $w={384} $p="7px 4px 0 3px">
          <FormRow><Label $w={88}>Opk. zbiorczych:</Label><Field $w={87} $off $right>0<Caret $off $tight /></Field><Combo w={196} off ml={5} /></FormRow>
          <FormRow><Label $w={88}>Jedn. własna:</Label><Field $w={87} $off $right>1<Caret $off $tight /></Field></FormRow>
          <FormRow><Label $w={88}>Jedn. kontr.:</Label><Field $w={87} $off $right>1<Caret $off $tight /></Field></FormRow>
          <FormRow><Label $w={88}>Nr ser./licencji:</Label><Field $w={288} $off /></FormRow>
        </Panel>
        <Row $ml={4} $stretch $grow>
          <Panel $grow>
            <InnerBox />
          </Panel>
        </Row>
      </Row>
      <Row $mt={3} $h={20}>
        <Tick ml={5} />
        <Label $w={315}>Włącz edycję ilości</Label>
        <Btn $w={75}>Receptura</Btn>
        <Btn $w={75} $ml={4}>Zapisz</Btn>
        <Btn $w={75} $ml={4}>Anuluj</Btn>
      </Row>
    </WinBody>
  </Win>
);

const ArticleWindow = () => (
  <Win $x={434} $y={207} $w={765} $h={596} $z={3} $deep>
    <WinCaption $h={28} $pad={6}>
      <WinLogo><EuroLogo /></WinLogo>
      <WinName>Raks SQL Sprzedaż</WinName>
      <CloseRed>X</CloseRed>
    </WinCaption>
    <WinBody $m="0 7px 4px 5px" $p="3px 2px 4px 3px">
      <NavyBar>
        <Cells color="#2fa048" />
        Definicja artykułu
        <NavyTools>
          <NavyBtn><NavIcon kind="box" /></NavyBtn>
          <NavyBtn>?</NavyBtn>
        </NavyTools>
      </NavyBar>
      <Row $mt={3} $h={240} $stretch>
        <PlainStack $w={559}>
          <Panel $h={55} $p="8px 0 0 2px">
            <FormRow>
              <Label $w={70}>Rodzaj:</Label>
              <Combo value="Towar" w={316} strong />
              <Tick ml={7} />
              <Label>Licencja/towar z nr seryjnym</Label>
            </FormRow>
            <FormRow>
              <Tick ml={7} />
              <Label>Artykuł archiwalny</Label>
            </FormRow>
          </Panel>
          <Row $mt={5} $stretch>
            <Panel $w={559} $h={180} $p="6px 3px 0 2px">
              <FormRow>
                <Label $w={70}>Indeks 1:</Label>
                <Field $w={180} $strong><TextCaret /></Field>
                <Label $w={52} $ml={5}>Indeks 2:</Label>
                <Field $w={245} $strong />
              </FormRow>
              <FormRow><Label $w={70}>Nazwa:</Label><Field $w={482} $strong /></FormRow>
              <FormRow>
                <Label $w={70}>Grupa:</Label>
                <Combo value="Wszystkie" w={147} strong />
                <Label $w={77} $ml={6}>Kod kreskowy:</Label>
                <Field $w={252} />
              </FormRow>
              <FormRow>
                <Label $w={70}>PKWiU:</Label>
                <Field $w={147} />
                <Label $w={77} $ml={6}>PCN:</Label>
                <Combo w={234} />
                <MiniBtn>...</MiniBtn>
              </FormRow>
              <FormRow>
                <Label $w={70}>Dostawca:</Label>
                <Field $w={147}><Dots>...</Dots></Field>
                <Field $w={327} $ml={8} $off />
              </FormRow>
              <FormRow>
                <Label $w={70}>Producent:</Label>
                <Field $w={147}><Dots>...</Dots></Field>
                <Field $w={327} $ml={8} $off />
              </FormRow>
              <FormRow>
                <Label $w={70}>Lokalizacja:</Label>
                <Combo w={464} />
                <MiniBtn>...</MiniBtn>
              </FormRow>
              <FormRow>
                <Label $w={70}>Analityka FK:</Label>
                <Field $w={264}>00001</Field>
                <Label $w={34} $ml={6}>GTIN:</Label>
                <Field $w={178} />
              </FormRow>
            </Panel>
          </Row>
        </PlainStack>
        <Row $ml={4} $stretch $grow>
          <Panel $grow>
            <PhotoBox>Zdjęcie artykułu</PhotoBox>
          </Panel>
        </Row>
      </Row>
      <TabBar $pl={5} $h={19} $mt={7}>
        <Tab $w={100} $active>Dane podstawowe</Tab>
        {articleTabs.map(([name, w]) => <Tab key={name} $w={w}>{name}</Tab>)}
        <TabArrow $ml={9} $dim>◀</TabArrow>
        <TabArrow $ml={2}>▶</TabArrow>
      </TabBar>
      <Row $mt={5} $ml={3} $h={115} $stretch>
        <Panel $w={314}>
          <SectionHead $big $pl={8}>Parametry</SectionHead>
          <PlainStack $p="6px 0 0 2px">
            <FormRow><Label $w={128}>Stawka VAT:</Label><Combo value="23%" w={162} strong /><MiniBtn $ml={1}>...</MiniBtn></FormRow>
            <FormRow><Label $w={128}>Domyślny rabat:</Label><Combo w={162} /><MiniBtn $ml={1}>...</MiniBtn></FormRow>
            <FormRow><Label $w={128}>Prowizja akwizytora [%]:</Label><Field $w={179} $right>0</Field></FormRow>
            <FormRow><Tick on ml={6} /><Label>Ostrzegaj, jeśli cena sprzedaży niższa od ceny zakupu</Label></FormRow>
          </PlainStack>
        </Panel>
        <Row $ml={4} $stretch>
          <Panel $w={420}>
            <SectionHead $big $pl={8}>Jednostki</SectionHead>
            <PlainStack $p="6px 0 0 2px">
              <FormRow><Label $w={153}>Jednostka miary:</Label><Combo w={172} strong /><MiniBtn $w={15}>...</MiniBtn><Tick on ml={6} /><Label>Podzielna</Label></FormRow>
              <FormRow><Label $w={153}>Domyślne opk. kaucjonowane:</Label><Combo w={259} /></FormRow>
              <FormRow><Label $w={153}>Ilość w opk. kaucjonowanym:</Label><Field $w={75} $right>0</Field></FormRow>
              <FormRow><Label $w={153}>Termin ważności:</Label><Field $w={75} $right>0</Field><Label $ml={4}>dni</Label></FormRow>
            </PlainStack>
          </Panel>
        </Row>
      </Row>
      <Row $mt={4} $ml={3} $h={110} $stretch>
        <Panel $w={738}>
          <SectionHead $big $pl={8}>Ceny sprzedaży (tylko podgląd)</SectionHead>
          <ListBox>
            <GridHead $w={660} $inset>
              {priceColumns.map(([name, w]) => (
                <HeadCell key={name} $w={w} $thin>{name}{name === 'Waluta' && <CaretUp>△</CaretUp>}</HeadCell>
              ))}
            </GridHead>
          </ListBox>
        </Panel>
      </Row>
      <Row $mt={7} $h={20} $end>
        <Btn $w={74}>Zapisz</Btn>
        <Btn $w={75} $ml={4}>Anuluj</Btn>
      </Row>
    </WinBody>
  </Win>
);

const ListWindow = () => (
  <Win $x={565} $y={310} $w={1090} $h={713} $z={2}>
    <WinCaption $h={29} $pad={6}>
      <WinLogo><EuroLogo /></WinLogo>
      <WinName>Raks SQL Sprzedaż</WinName>
      <CaptionGroup>
        <CaptionBtn $w={28}><CapMinDim /></CaptionBtn>
        <CaptionBtn $w={27}><CapMax /></CaptionBtn>
        <CaptionBtn $w={46}><CapClose /></CaptionBtn>
      </CaptionGroup>
    </WinCaption>
    <WinBody $m="0 6px 5px 4px" $p="3px 2px 4px 4px">
      <NavyBar>
        <Cells color="#2f7fd0" />
        Kartoteka artykułów
        <NavyTools>
          <NavyBtn><NavIcon kind="print" /></NavyBtn>
          <NavyBtn><NavIcon kind="find" /></NavyBtn>
          <NavyBtn><NavIcon kind="sync" /></NavyBtn>
          <NavyBtn><NavIcon kind="expand" /></NavyBtn>
          <NavyBtn><NavIcon kind="box" /></NavyBtn>
          <NavyBtn>?</NavyBtn>
        </NavyTools>
      </NavyBar>
      <Columns>
        <ColumnSide />
        <ColumnMain>
          <GrayBand />
          <GridHead $open>
            <HeadCell $w={388} $thin />
            <HeadCell $w={157} $thin>Nazwa<HeadDrop><i /></HeadDrop></HeadCell>
            <HeadCell $w={150} $thin>Cechy<HeadDrop><i /></HeadDrop></HeadCell>
            <HeadCell $w={110} $thin>PKWiU<HeadDrop><i /></HeadDrop></HeadCell>
            <HeadCell $w={60} $thin>Ostrz. c<HeadDrop><i /></HeadDrop></HeadCell>
            <HeadCell $w={16} $thin>Wa</HeadCell>
          </GridHead>
          {articleRows.map(([name, attr, code], i) => {
            const bg = i % 2 ? '#f1f1f1' : '#fff';
            return (
              <ListRow key={name}>
                <GridCell $w={388} $bg={bg} />
                <GridCell $w={157} $bg={bg} $focus={i === 0}>{name}</GridCell>
                <GridCell $w={150} $bg={bg}>{attr}</GridCell>
                <GridCell $w={110} $bg={bg}>{code}</GridCell>
                <GridCell $w={60} $bg={bg} $center><CheckCell><TickMark /></CheckCell></GridCell>
                <GridCell $w={16} $bg={bg} />
              </ListRow>
            );
          })}
          <Fill $white />
          <HScroll $h={17}>
            <ScrollArrow $w={15}>◀</ScrollArrow>
            <ScrollThumb $w={207} $ml={6} />
            <Spacer />
            <ScrollArrow $w={17}>▶</ScrollArrow>
          </HScroll>
          <Splitter><i /><span /><i /></Splitter>
          <TabBar $pl={6} $h={20} $mt={2} $fill>
            <Tab $w={72} $active>Opis artykułu</Tab>
            {lowerTabs.map(([name, w]) => <Tab key={name} $w={w}>{name}</Tab>)}
          </TabBar>
          <MemoBox>
            <MemoMain>
              <VScroll>
                <VArrow $w={15} $dim>▲</VArrow>
                <VArrow $w={15} $dim>▼</VArrow>
              </VScroll>
            </MemoMain>
            <HScroll $h={15}>
              <ScrollArrow $w={15} $dim>◀</ScrollArrow>
              <Spacer />
              <ScrollArrow $w={15} $dim>▶</ScrollArrow>
              <ScrollCorner />
            </HScroll>
          </MemoBox>
        </ColumnMain>
      </Columns>
      <Row $mt={4} $h={20} $end>
        {bottomButtons.map(([name, w, ml, def]) => <Btn key={name} $w={w} $ml={ml} $default={def}>{name}</Btn>)}
      </Row>
    </WinBody>
  </Win>
);

const App = () => (
  <Desktop>
    <GlobalStyle />
    <AppTitle>
      <AppLogo><EuroLogo /></AppLogo>
      <AppName>Raks SQL Sprzedaż wersja 2011 (0.2.885) Mała i Średnia Firma</AppName>
      <CaptionGroup>
        <CaptionBtn $w={28}><CapMin /></CaptionBtn>
        <CaptionBtn $w={27}><CapRestore /></CaptionBtn>
        <CaptionBtn $w={46}><CapClose /></CaptionBtn>
      </CaptionGroup>
    </AppTitle>
    <MenuBar>
      {menu.map(([label, w], i) => <MenuItem key={i} $w={w}>{label}</MenuItem>)}
      <MenuEnd />
    </MenuBar>
    <ToolBar>
      {tools.map(([kind, w], i) => (
        <ToolSlot key={i} $w={w}>
          {kind === 'grip' ? <Grip /> : kind === 'sep' ? <ToolSep /> : kind === 'caret' ? <ToolCaret /> : <ToolIcon kind={kind} />}
        </ToolSlot>
      ))}
    </ToolBar>
    <SaleWindow />
    <ListWindow />
    <ArticleWindow />
    <Spacer />
    <StatusBar>
      <StatusLock><LockIcon /></StatusLock>
      <StatusCell $w={104} $gap={5}>Zmiana modułu<StatusCaret /></StatusCell>
      {status.map(([text, w, gap]) => <StatusCell key={text} $w={w} $gap={gap}>{text}</StatusCell>)}
    </StatusBar>
  </Desktop>
);

export default App;
